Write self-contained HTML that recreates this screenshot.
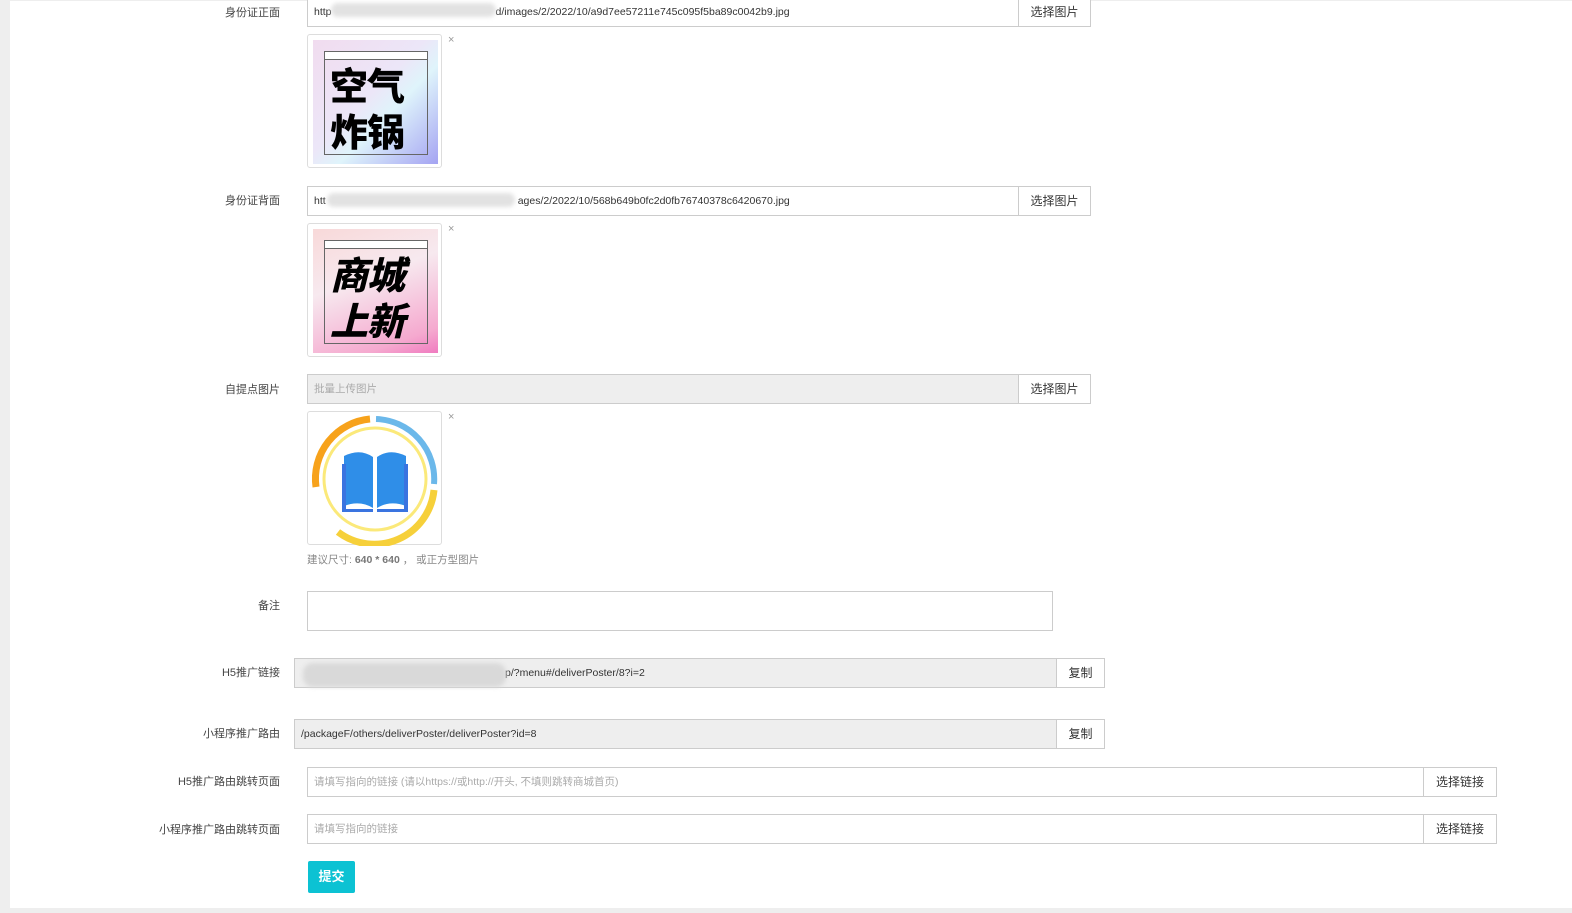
<!DOCTYPE html>
<html><head><meta charset="utf-8">
<style>
*{margin:0;padding:0;box-sizing:border-box}
body{width:1572px;height:913px;background:#fff;position:relative;overflow:hidden;font-family:"Liberation Sans","Noto Sans CJK SC",sans-serif;font-size:11px;color:#333}
.a{position:absolute}
.lbl{position:absolute;right:1292px;font-size:11px;color:#444;white-space:nowrap}
.inp{position:absolute;border:1px solid #ccc;background:#fff;height:30px;line-height:28px;padding-left:6px;font-size:10.5px;color:#333;white-space:nowrap;overflow:hidden}
.gray{background:#eee}
.btn{position:absolute;border:1px solid #ccc;background:#fff;height:30px;line-height:28px;text-align:center;font-size:12px;color:#333}
.ph{color:#aaa}
.thumb{position:absolute;width:135px;height:134px;border:1px solid #ddd;border-radius:3px;background:#fff}
.x{position:absolute;font-size:11px;color:#999}
.blur{position:absolute;background:#e2e2e2;border-radius:10px;filter:blur(2px)}
.pic{position:absolute;left:5px;top:5px;width:125px;height:124px}
.frame{position:absolute;left:11px;top:11px;width:104px;height:104px;border:1px solid #666}
.frame:before{content:"";position:absolute;left:0;right:0;top:0;height:7px;border-bottom:1px solid #666;background:#fff}
.big{position:absolute;left:17px;top:21px;font-size:38px;font-weight:900;line-height:46px;color:#000;font-family:"Noto Sans CJK SC",sans-serif;letter-spacing:-1px}
</style></head><body>
<div class="a" style="left:0;top:0;width:10px;height:913px;background:#eee"></div>
<div class="a" style="left:0;top:908px;width:1572px;height:5px;background:#eee"></div>
<div class="a" style="left:10px;top:0;width:1562px;height:1px;background:#eee"></div>

<div class="lbl" style="top:4px">身份证正面</div>
<div class="inp" style="left:307px;top:-3px;width:712px">http<span style="display:inline-block;width:164px"></span>d/images/2/2022/10/a9d7ee57211e745c095f5ba89c0042b9.jpg</div>
<div class="blur" style="left:331px;top:3px;width:165px;height:14px"></div>
<div class="btn" style="left:1018px;top:-3px;width:73px">选择图片</div>
<div class="thumb" style="left:307px;top:34px"><div class="pic" style="background:linear-gradient(135deg,#f1dcef 0%,#ece6f8 45%,#dff4fb 60%,#a4a3f2 100%)"><div class="frame"></div><div class="big">空气<br>炸锅</div></div></div>
<div class="x" style="left:448px;top:34px">×</div>

<div class="lbl" style="top:192px">身份证背面</div>
<div class="inp" style="left:307px;top:186px;width:712px">htt<span style="display:inline-block;width:192px"></span>ages/2/2022/10/568b649b0fc2d0fb76740378c6420670.jpg</div>
<div class="blur" style="left:327px;top:193px;width:188px;height:14px"></div>
<div class="btn" style="left:1018px;top:186px;width:73px">选择图片</div>
<div class="thumb" style="left:307px;top:223px"><div class="pic" style="background:linear-gradient(160deg,#f8d9d9 0%,#f7e9ef 40%,#f5a9cf 85%,#f07bc0 100%)"><div class="frame"></div><div class="big" style="font-style:italic">商城<br>上新</div></div></div>
<div class="x" style="left:448px;top:223px">×</div>

<div class="lbl" style="top:381px">自提点图片</div>
<div class="inp gray ph" style="left:307px;top:374px;width:712px">批量上传图片</div>
<div class="btn" style="left:1018px;top:374px;width:73px">选择图片</div>
<div class="thumb" style="left:307px;top:411px">
<svg width="135" height="134" viewBox="0 0 135 134">
<path d="M8 75 A60 60 0 0 1 62 7" stroke="#f7a21b" stroke-width="7" fill="none"/>
<path d="M68 7 A60 60 0 0 1 126 72" stroke="#6bb8ea" stroke-width="6" fill="none"/>
<path d="M126 78 A60 60 0 0 1 30 120" stroke="#f6d03a" stroke-width="7" fill="none"/>
<circle cx="67" cy="67" r="51" stroke="#fbe97a" stroke-width="3" fill="none"/>
<path d="M36 44 Q52 36 65 45 L65 96 Q52 88 36 94Z" fill="#2f8ee8"/>
<path d="M98 44 Q82 36 69 45 L69 96 Q82 88 98 94Z" fill="#2f8ee8"/>
<path d="M34 52 L34 100 L65 100 L65 97 L38 97 L38 52Z M100 52 L100 100 L69 100 L69 97 L96 97 L96 52Z" fill="#3a74e0"/>
</svg></div>
<div class="x" style="left:448px;top:411px">×</div>
<div class="a" style="left:307px;top:552px;font-size:10.5px;color:#888">建议尺寸: <b style="font-weight:600;color:#777">640 * 640</b> ， 或正方型图片</div>

<div class="lbl" style="top:597px">备注</div>
<div class="a" style="left:307px;top:591px;width:746px;height:40px;border:1px solid #ccc"></div>

<div class="lbl" style="top:664px">H5推广链接</div>
<div class="inp gray" style="left:294px;top:658px;width:763px;padding-left:210px">p/?menu#/deliverPoster/8?i=2</div>
<div class="blur" style="left:303px;top:663px;width:203px;height:24px;background:#d9d9d9"></div>
<div class="btn" style="left:1056px;top:658px;width:49px">复制</div>

<div class="lbl" style="top:725px">小程序推广路由</div>
<div class="inp gray" style="left:294px;top:719px;width:763px">/packageF/others/deliverPoster/deliverPoster?id=8</div>
<div class="btn" style="left:1056px;top:719px;width:49px">复制</div>

<div class="lbl" style="top:773px">H5推广路由跳转页面</div>
<div class="inp ph" style="left:307px;top:767px;width:1117px">请填写指向的链接 (请以https://或http://开头, 不填则跳转商城首页)</div>
<div class="btn" style="left:1423px;top:767px;width:74px">选择链接</div>

<div class="lbl" style="top:821px">小程序推广路由跳转页面</div>
<div class="inp ph" style="left:307px;top:814px;width:1117px">请填写指向的链接</div>
<div class="btn" style="left:1423px;top:814px;width:74px">选择链接</div>

<div class="a" style="left:308px;top:861px;width:47px;height:32px;background:#0cc2d3;border-radius:2px;color:#fff;font-size:13px;font-weight:bold;text-align:center;line-height:31px">提交</div>
</body></html>
